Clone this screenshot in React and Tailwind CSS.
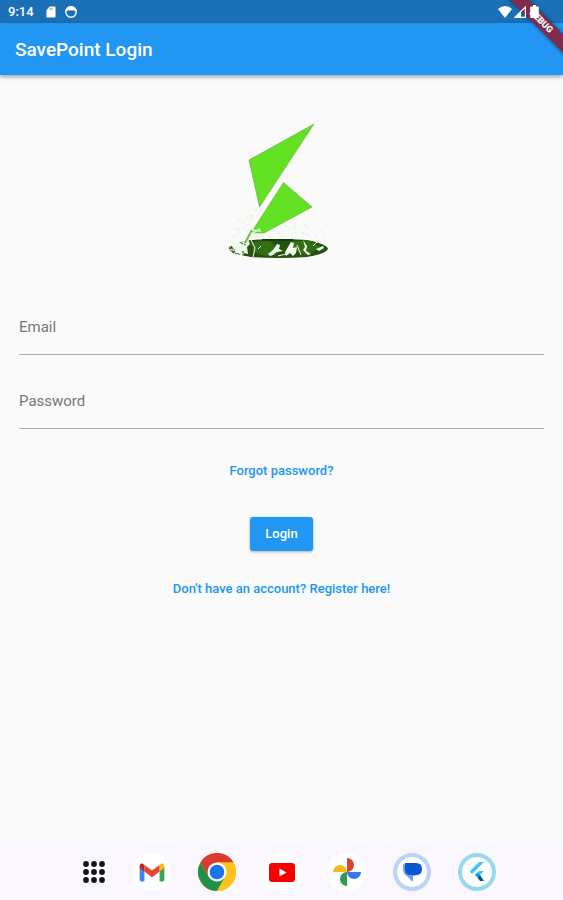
import React from "react";

const StatusBar = () => (
    <div className="flex h-[23px] items-center bg-[#1a70b6] pl-2 pr-[24px] text-white">
        <span className="text-[13px] font-medium leading-4">9:14</span>
        <svg className="ml-3 h-3 w-[10px]" viewBox="0 0 11 12" fill="currentColor" aria-hidden="true">
            <path fillRule="evenodd" d="M4 0h5.5q1 0 1 1v10q0 1-1 1h-8q-1 0-1-1V4zM4 2v1.500h1V2zm2 0v1.500h1V2z" />
        </svg>
        <svg className="ml-2 h-[14px] w-[14px]" viewBox="0 0 14 14" fill="none" stroke="currentColor" aria-hidden="true">
            <circle cx="7" cy="7" r="5.2" strokeWidth="1.4" />
            <path d="M1.500 5.500Q3 1.500 7 1.500t5.500 4Q11 6 10 5H4Q3 6 1.500 5.500z" fill="currentColor" strokeWidth="0.800" />
        </svg>
        <div className="z-20 ml-auto flex items-center">
            <svg className="h-[14px] w-[14px]" viewBox="0 0 14 14" fill="currentColor" aria-hidden="true">
                <path d="M0 4Q7-2 14 4L7 13z" />
            </svg>
            <svg className="ml-[2px] h-3 w-3" viewBox="0 0 12 12" aria-hidden="true">
                <path d="M11.400 1v10.400H1z" fill="none" stroke="currentColor" strokeWidth="1.200" />
                <path d="M7 5.500V11.500H1z" fill="currentColor" />
            </svg>
            <svg className="ml-1 h-[13px] w-[9px]" viewBox="0 0 9 13" fill="currentColor" aria-hidden="true">
                <path d="M3 0h3v1.500h2q.8 0 .8.800v9.900q0 .8-.8.800H1q-.8 0-.8-.8V2.300q0-.8.8-.8h2z" />
            </svg>
        </div>
    </div>
);

const DebugBanner = () => (
    <div className="pointer-events-none absolute right-0 top-0 z-10 h-[56px] w-[56px] overflow-hidden">
        <div className="absolute -right-[38px] top-[15px] w-[120px] rotate-45 bg-[#7d2d4b] text-center text-[9px] font-black leading-[13px] text-white shadow-[0_0_4px_rgba(0,0,0,0.5)]">
            DEBUG
        </div>
    </div>
);

const Logo = () => (
    <svg className="mx-auto h-[160px] w-[130px]" viewBox="217 110 130 160" role="img" aria-label="SavePoint">
        <g fill="#62e222" stroke="#559b3b" strokeWidth="0.500">
            <path d="M314 124L249 160L259.500 207z" />
            <path d="M283.500 182.500L312 207L264 233L251 233z" />
        </g>
        {/* Ground */}
        <path d="M229 249Q231 243 251 240Q279 238 307 240Q327 244 328 249Q326 254 307 257Q279 259 251 257Q231 254 229 249z" fill="#24520f" />
        <path d="M251 243L270 240L275 248L267 256L253 252zM290 242L307 240L322 247L306 255L294 251z" fill="#326f13" />
        <path d="M262 240h31" stroke="#183a0a" strokeWidth="2" />
        {/* Splashes */}
        <g fill="#f2faec">
            <path d="M230 243l7-3 3 3 8-4 2 5-3 3 1 7-4-1-2 3-4-3-4 2 1-4-6-1 4-2z" />
            <path d="M268 254l5-4 4-6 3 1-1 4 4 2-6 1-4 3-3 1z" />
            <path d="M285 252l3-5 3-5 3 1-1 5 4-1-1 6-3 3-3-3-4 3z" />
            <path d="M303 240l4 6-1 5 5 3-3 1-5-5 2-3zM316 249l7-3 1 2-5 3z" />
        </g>
        <g stroke="#f4fbef" strokeWidth="1" fill="none">
            <path d="M251 240l4 8-2 9M261 246l-3 3M297 245l4 10M318 241l-5 5M278 256l8-2" />
        </g>
        <g stroke="#5b7950" strokeWidth="1.500" fill="none">
            <path d="M229 247l6 3M232 252l5 2M241 243l5 2M243 251v4" strokeDasharray="2 1" />
        </g>
        <path d="M252 230l-7 13" stroke="#62c73b" strokeWidth="2" fill="none" />
        <path d="M251 234l9-5M252 230l9 1M254 237l8-2" stroke="#e2fad6" strokeWidth="1.500" fill="none" />
        <g stroke="#c3f5ad" strokeWidth="1" fill="none" opacity="0.600">
            <path d="M250 207l7 4M246 218l5-3 3 5M237 219l4 3M235 230l4-2 1 5M242 228l6 4M252 215l-2 8M232 238l5-3M248 226l-5-5" strokeDasharray="3 1" />
            <path d="M285 225l6 6M296 222l-2 8M305 224l3 5M302 233l7 2M277 233l8 3M291 235l6-3M315 235l3 4M319 232l3-2M323 239l3-3M268 237l5-2" strokeDasharray="3 1" />
        </g>
    </svg>
);

const Field = ({ id, type, label }) => (
    <div className="grid pt-5">
        <input
            id={id}
            type={type}
            placeholder=" "
            className="peer col-start-1 row-start-1 h-[54px] w-full border-b border-[#acacac] bg-transparent text-[15px] text-gray-800 outline-none focus:border-[#2196f3]"
        />
        <label
            htmlFor={id}
            className="invisible col-start-1 row-start-1 mb-[2px] self-center justify-self-start text-[15px] leading-5 text-[#777777] peer-placeholder-shown:visible"
        >
            {label}
        </label>
    </div>
);

const DockIcon = ({ label, className, children }) => (
    <button type="button" aria-label={label} className={`flex h-[38px] w-[38px] items-center justify-center rounded-full ${className}`}>
        {children}
    </button>
);

const Dock = () => (
    <nav className="flex h-[60px] items-center justify-center gap-[27px] bg-[#faf8fe] pl-[14px] pt-[4px]">
        <button type="button" aria-label="All apps" className="flex w-6 justify-center">
            <svg className="h-6 w-6" viewBox="0 0 24 24" fill="#171717">
                {[4, 12, 20].map((y) => [4, 12, 20].map((x) => <circle key={`${x}-${y}`} cx={x} cy={y} r="2.900" />))}
            </svg>
        </button>
        <DockIcon label="Gmail" className="bg-white">
            <svg className="h-[19px] w-[26px]" viewBox="0 0 26 20">
                <path d="M0 4l5 4v11.500H2q-2 0-2-2z" fill="#4285f4" />
                <path d="M21 8l5-4v13.500q0 2-2 2h-3z" fill="#34a853" />
                <path d="M5 2l8 6 8-6v7l-8 6-8-6z" fill="#ea4335" />
                <path d="M0 4Q0 0 3 .5L5 2v7L0 5z" fill="#c5221f" />
                <path d="M26 4q0-4-3-3.500L21 2v7l5-4z" fill="#fbbc04" />
            </svg>
        </DockIcon>
        <DockIcon label="Chrome" className="bg-white">
            <svg className="h-[38px] w-[38px]" viewBox="0 0 38 38">
                <circle cx="19" cy="19" r="19" fill="#fcc31e" />
                <path d="M2.500 9.500A19 19 0 0 1 35.500 9.500H19L10.800 23.800z" fill="#db3a2f" />
                <path d="M2.500 9.500A19 19 0 0 0 19 38L27.200 23.800H10.800z" fill="#219149" />
                <path d="M19 9.500H35.500A19 19 0 0 1 19 38L27.200 23.800z" fill="#fcc31e" />
                <circle cx="19" cy="19" r="9.500" fill="#ffffff" />
                <circle cx="19" cy="19" r="7.300" fill="#1a73e8" />
            </svg>
        </DockIcon>
        <DockIcon label="YouTube" className="bg-white">
            <svg className="h-[19px] w-[26px]" viewBox="0 0 26 19">
                <rect width="26" height="19" rx="3" fill="#f70000" />
                <path d="M10.500 5.500l7 4-7 4z" fill="#ffffff" />
            </svg>
        </DockIcon>
        <DockIcon label="Photos" className="bg-white">
            <svg className="h-7 w-7" viewBox="0 0 28 28">
                <path d="M14 0a7 7 0 0 1 0 14z" fill="#dc4436" />
                <path d="M28 14a7 7 0 0 1-14 0z" fill="#3978e6" />
                <path d="M14 28a7 7 0 0 1 0-14z" fill="#2c9c4e" />
                <path d="M0 14a7 7 0 0 1 14 0z" fill="#f5ba18" />
            </svg>
        </DockIcon>
        <DockIcon label="Messages" className="border-4 border-[#b9d3f5] bg-white">
            <svg className="h-5 w-5 shrink-0" viewBox="0 0 20 20">
                <path d="M1 2l3 1h10l2 10-5 1v6l-5-5Q1 12 1 7z" fill="#6e9cf7" />
                <path d="M3 1H14q6 0 6 6t-6 6H9Q3 13 3 7z" fill="#0b57d0" />
            </svg>
        </DockIcon>
        <DockIcon label="Flutter" className="border-4 border-[#98d8ee] bg-white">
            <svg className="h-5 w-4 shrink-0" viewBox="0 0 16 20">
                <path d="M10 0h5L3 12 .5 9.500z" fill="#47c5fb" />
                <path d="M10 9h5l-5 5-4-1z" fill="#47c5fb" />
                <path d="M6 13l2.500-2.500L11 13l-2.500 2.500z" fill="#00a5e5" />
                <path d="M8.500 15.500L11 13l4 6h-4z" fill="#00569e" />
            </svg>
        </DockIcon>
    </nav>
);

const App = () => {
    return (
        <div className="relative flex min-h-screen flex-col bg-[#fafafa] font-[Roboto,sans-serif]">
            <StatusBar />
            <DebugBanner />

            {/* App bar */}
            <header className="flex h-[52px] items-center bg-[#2196f3] px-[15px] pt-px shadow-[0_2px_4px_rgba(0,0,0,0.35)]">
                <h1 className="text-[19px] font-medium leading-6 text-white">SavePoint Login</h1>
            </header>

            {/* Login form */}
            <main className="flex-1 pt-[35px]">
                <Logo />
                <form className="flex flex-col px-[19px] pt-[11px]" onSubmit={(e) => e.preventDefault()}>
                    <Field id="email" type="email" label="Email" />
                    <Field id="password" type="password" label="Password" />
                    <a href="#forgot" className="mt-8 self-center text-[13px] font-medium leading-5 text-[#2196f3]">
                        Forgot password?
                    </a>
                    <button
                        type="submit"
                        className="mt-9 h-[34px] w-[63px] self-center rounded-[3px] bg-[#2196f3] text-[13px] font-medium text-white shadow-[0_1px_3px_rgba(0,0,0,0.3)]"
                    >
                        Login
                    </button>
                    <a href="#register" className="mt-7 self-center text-[13px] font-medium leading-5 text-[#2196f3]">
                        Don't have an account? Register here!
                    </a>
                </form>
            </main>

            <Dock />
        </div>
    );
};

export default App;
